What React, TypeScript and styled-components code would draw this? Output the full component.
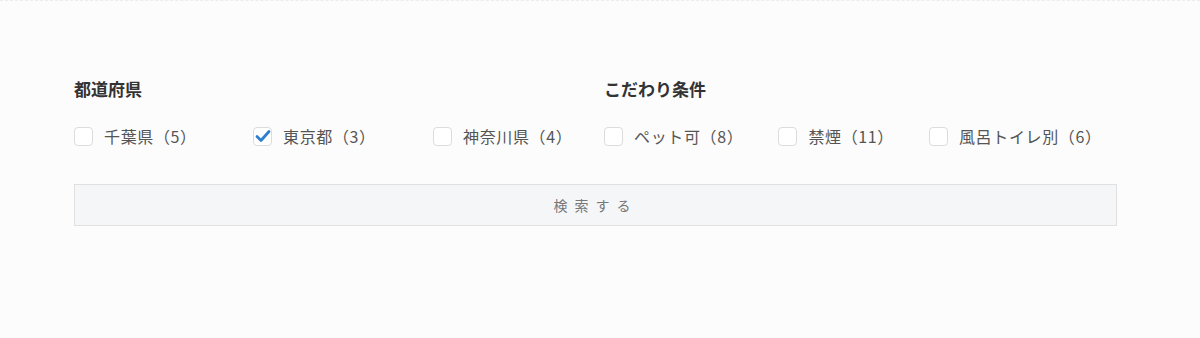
import React, { useState } from "react";
import styled, { createGlobalStyle } from "styled-components";

const Global = createGlobalStyle`
  html, body { margin: 0; padding: 0; background: #fcfcfc; }
  body { font-family: "Noto Sans CJK JP", "Noto Sans", sans-serif; color: #333; }
`;

const Page = styled.div`
  width: 1200px;
  height: 338px;
  box-sizing: border-box;
  border-top: 1px dashed #ececec;
  padding: 72px 83px 0 74px;
`;

const Filters = styled.div`
  display: grid;
  grid-template-columns: 530px 1fr;
`;

const Section = styled.section`
  display: flex;
  flex-direction: column;
`;

const Heading = styled.h3`
  margin: 0;
  font-size: 17px;
  line-height: 32px;
  font-weight: 700;
  color: #333;
`;

const Options = styled.div<{ $fixed?: boolean }>`
  display: flex;
  margin-top: 15px;
  gap: ${(p) => (p.$fixed ? "0" : "35px")};
`;

const Option = styled.label<{ $width?: number }>`
  display: flex;
  align-items: center;
  gap: 11px;
  height: 32px;
  cursor: pointer;
  ${(p) => (p.$width ? `width: ${p.$width}px;` : "")}
  font-size: 16px;
  letter-spacing: 0.04em;
  color: #555;
`;

const Box = styled.span<{ $checked: boolean }>`
  width: 19px;
  height: 19px;
  box-sizing: border-box;
  border: 1px solid #dcdcdc;
  border-radius: 4px;
  background: #fff;
  display: inline-flex;
  align-items: center;
  justify-content: center;
  flex: none;
`;

const Hidden = styled.input`
  display: none;
`;

const SearchButton = styled.button`
  display: block;
  width: 100%;
  margin-top: 32px;
  height: 42px;
  border: 1px solid #e0e0e0;
  background: #f5f6f7;
  color: #777;
  font-family: "Noto Sans CJK JP", sans-serif;
  font-size: 14px;
  letter-spacing: 0.5em;
  padding: 0;
  cursor: pointer;
`;

const Check = () => (
  <svg width="16" height="14" viewBox="0 0 16 14">
    <path d="M2 7.5 L6 11.5 L14 2.5" fill="none" stroke="#2f7fd0" strokeWidth="2.8" strokeLinecap="round" strokeLinejoin="round" />
  </svg>
);

type Item = { label: string; count: number; width?: number };

const prefs: Item[] = [
  { label: "千葉県", count: 5, width: 179 },
  { label: "東京都", count: 3, width: 180 },
  { label: "神奈川県", count: 4 },
];

const extras: Item[] = [
  { label: "ペット可", count: 8 },
  { label: "禁煙", count: 11 },
  { label: "風呂トイレ別", count: 6 },
];

export default function App() {
  const [checked, setChecked] = useState<Record<string, boolean>>({ 東京都: true });
  const toggle = (k: string) => setChecked((c) => ({ ...c, [k]: !c[k] }));

  const renderItem = (it: Item) => (
    <Option key={it.label} $width={it.width}>
      <Hidden type="checkbox" checked={!!checked[it.label]} onChange={() => toggle(it.label)} />
      <Box $checked={!!checked[it.label]}>{checked[it.label] && <Check />}</Box>
      <span>{it.label}（{it.count}）</span>
    </Option>
  );

  return (
    <>
      <Global />
      <Page>
        <Filters>
          <Section>
            <Heading>都道府県</Heading>
            <Options $fixed>{prefs.map(renderItem)}</Options>
          </Section>
          <Section>
            <Heading>こだわり条件</Heading>
            <Options>{extras.map(renderItem)}</Options>
          </Section>
        </Filters>
        <SearchButton type="button">検索する</SearchButton>
      </Page>
    </>
  );
}
